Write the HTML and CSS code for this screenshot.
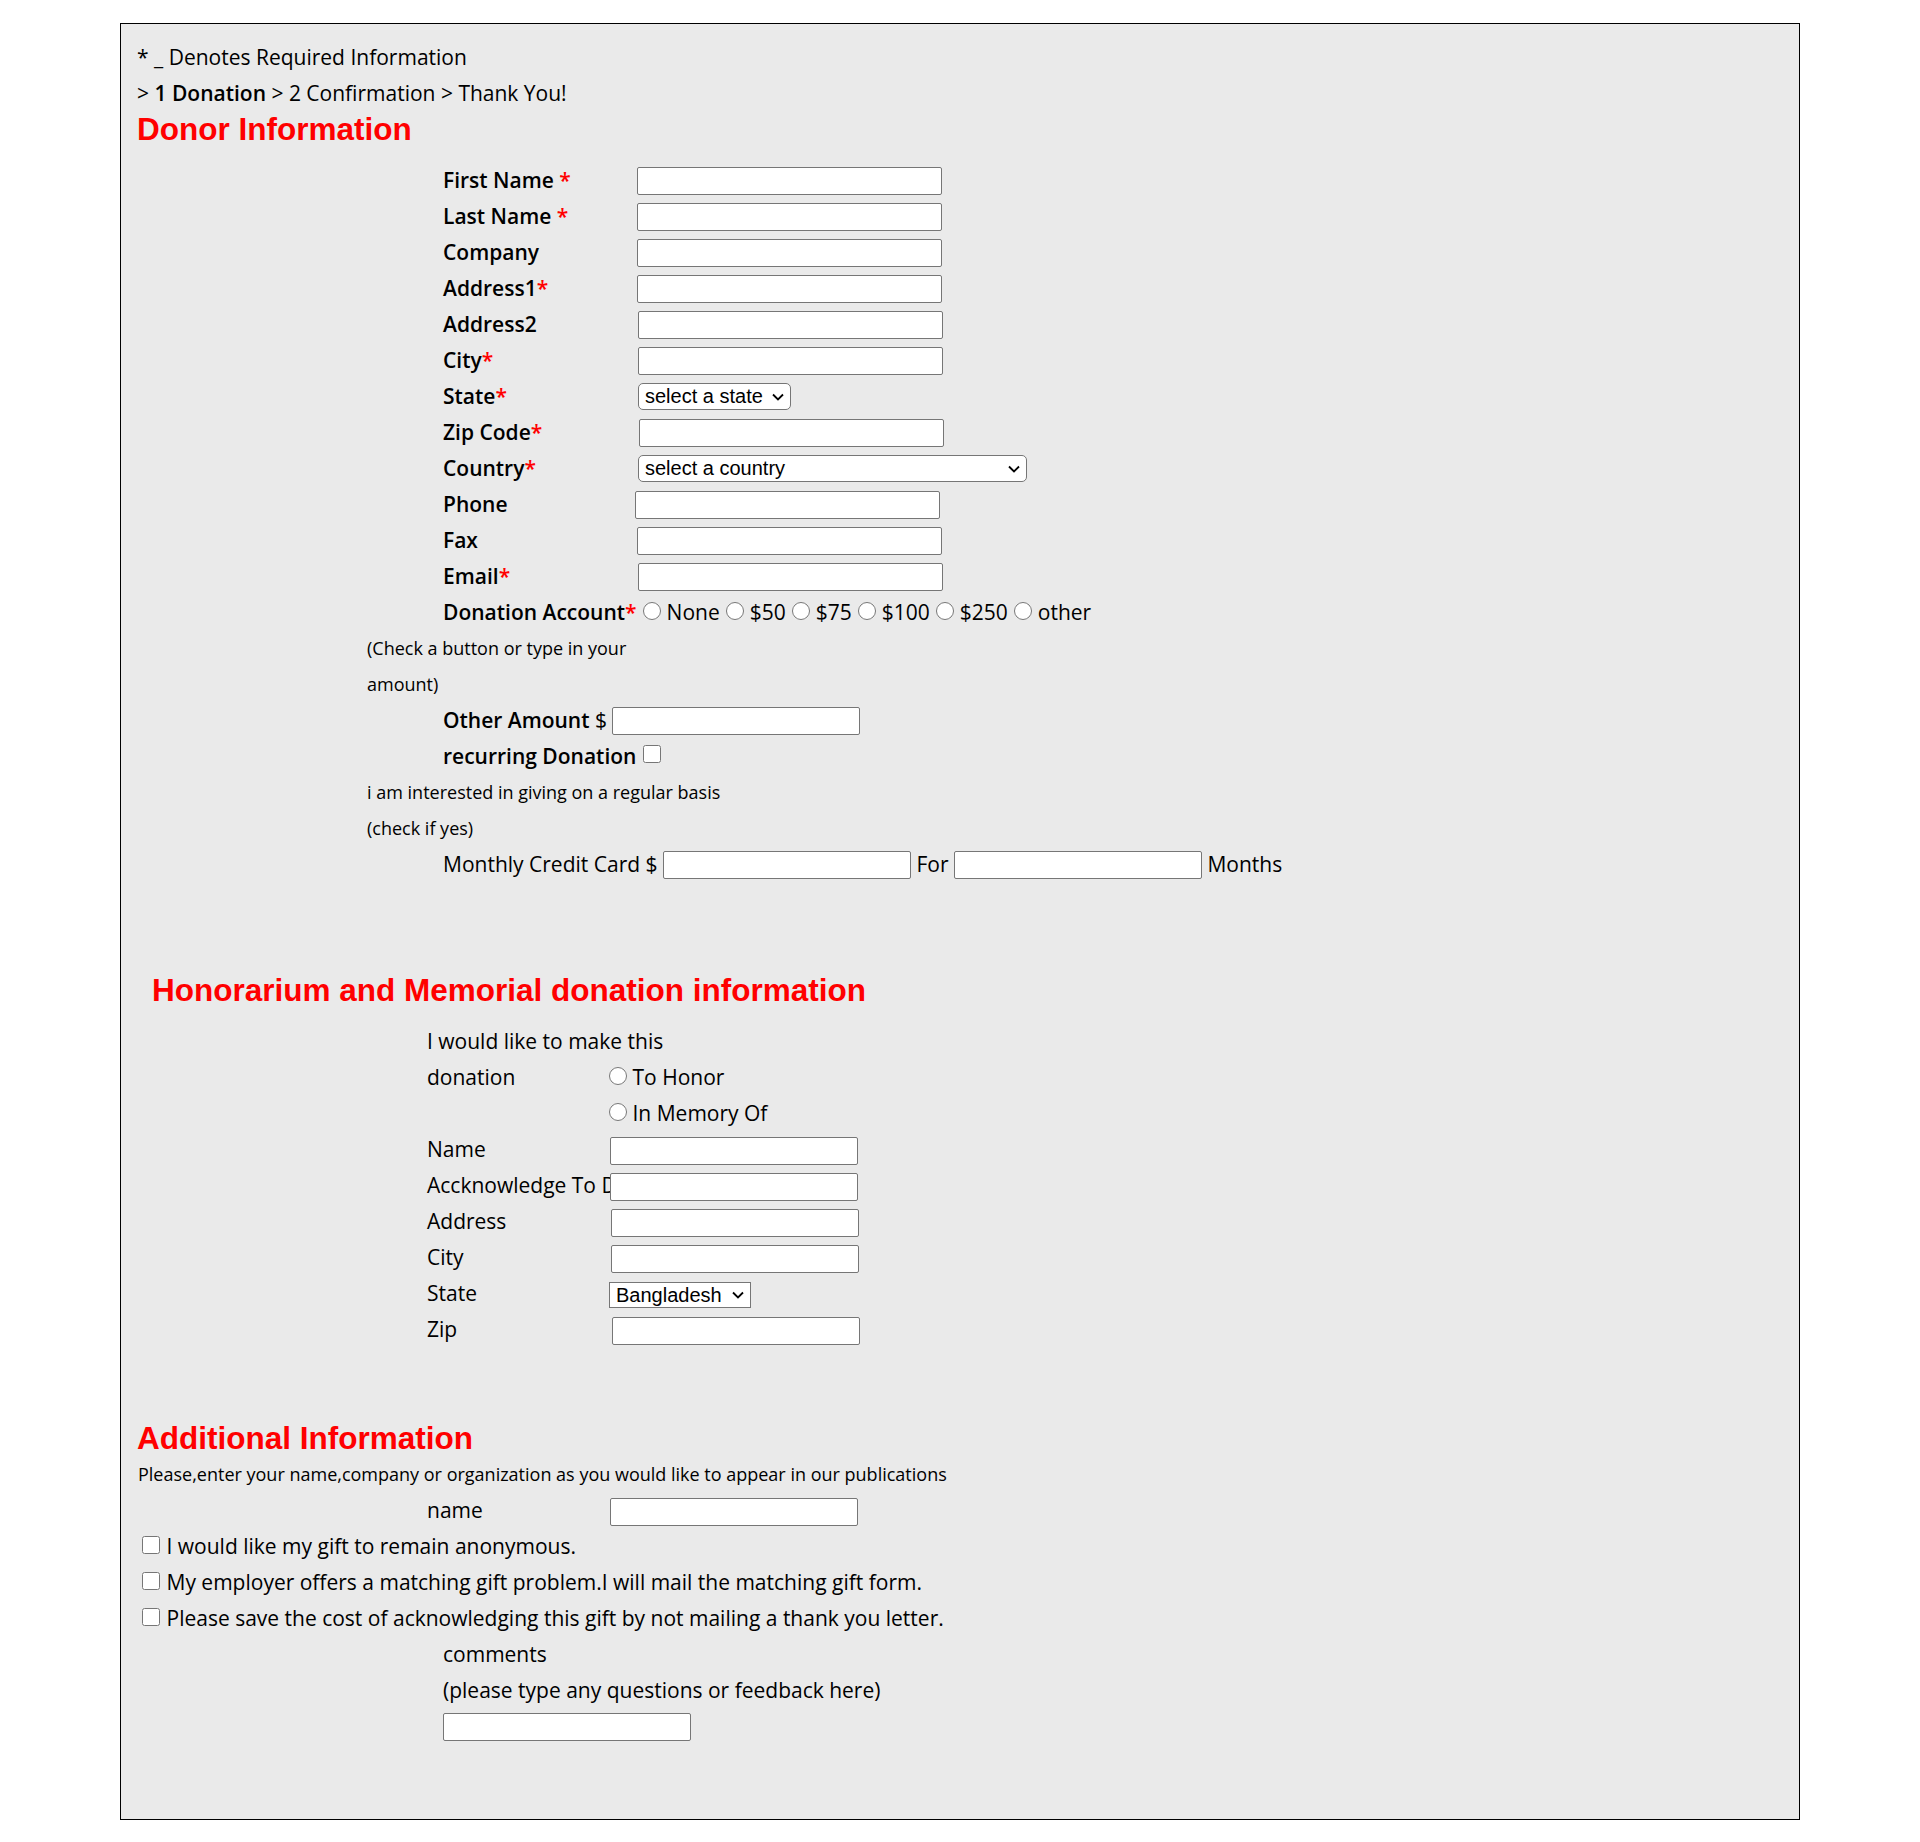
FILE: index.html
```html
<!DOCTYPE html>
<html lang="en">
<head>
<meta charset="utf-8">
<title>Donation</title>
<link rel="stylesheet" href="styles.css">
</head>
<body>
<div class="page">
  <div class="line">* _ Denotes Required Information</div>
  <div class="line">&gt; <b>1 Donation</b> &gt; 2 Confirmation &gt; Thank You!</div>
  <h2 class="head head-donor">Donor Information</h2>

  <div class="donor">
    <div class="row"><span class="lbl b">First Name <span class="req">*</span></span><input class="txt w305" type="text"></div>
    <div class="row"><span class="lbl b">Last Name <span class="req">*</span></span><input class="txt w305" type="text"></div>
    <div class="row"><span class="lbl b">Company</span><input class="txt w305" type="text"></div>
    <div class="row"><span class="lbl b">Address1<span class="req">*</span></span><input class="txt w305" type="text"></div>
    <div class="row"><span class="lbl b">Address2</span><input class="txt w305 dx1" type="text"></div>
    <div class="row"><span class="lbl b">City<span class="req">*</span></span><input class="txt w305 dx1" type="text"></div>
    <div class="row"><span class="lbl b">State<span class="req">*</span></span><span class="selwrap dx1"><select class="sel round w153"><option>select a state</option></select><svg class="chev" width="12" height="8" viewBox="0 0 12 8"><path d="M1 1.5 L6 6.5 L11 1.5" fill="none" stroke="#000" stroke-width="1.8"/></svg></span></div>
    <div class="row"><span class="lbl b">Zip Code<span class="req">*</span></span><input class="txt w305 dx2" type="text"></div>
    <div class="row"><span class="lbl b">Country<span class="req">*</span></span><span class="selwrap dx1"><select class="sel round w389"><option>select a country</option></select><svg class="chev" width="12" height="8" viewBox="0 0 12 8"><path d="M1 1.5 L6 6.5 L11 1.5" fill="none" stroke="#000" stroke-width="1.8"/></svg></span></div>
    <div class="row"><span class="lbl b">Phone</span><input class="txt w305 dxm2" type="text"></div>
    <div class="row"><span class="lbl b">Fax</span><input class="txt w305" type="text"></div>
    <div class="row"><span class="lbl b">Email<span class="req">*</span></span><input class="txt w305 dx1" type="text"></div>
    <div class="row"><span class="b">Donation Account<span class="req">*</span></span><input type="radio" name="amt" class="rd">None<input type="radio" name="amt" class="rd">$50<input type="radio" name="amt" class="rd">$75<input type="radio" name="amt" class="rd">$100<input type="radio" name="amt" class="rd">$250<input type="radio" name="amt" class="rd">other</div>
    <div class="note">(Check a button or type in your</div>
    <div class="note">amount)</div>
    <div class="row"><span class="b">Other Amount</span> $ <input class="txt w248" type="text"></div>
    <div class="row"><span class="b">recurring Donation</span><input type="checkbox" class="cb cb-rec"></div>
    <div class="note">i am interested in giving on a regular basis</div>
    <div class="note">(check if yes)</div>
    <div class="row">Monthly Credit Card $ <input class="txt w248" type="text"> For <input class="txt w248" type="text"> Months</div>
  </div>

  <h2 class="head head-hon">Honorarium and Memorial donation information</h2>

  <div class="hon">
    <div class="row">I would like to make this</div>
    <div class="row"><span class="lbl">donation</span><input type="radio" name="hon" class="rd rd-hon">To Honor</div>
    <div class="row"><span class="lbl"></span><input type="radio" name="hon" class="rd rd-hon">In Memory Of</div>
    <div class="row"><span class="lbl">Name</span><input class="txt w248" type="text"></div>
    <div class="row"><span class="lbl">Accknowledge To Donor</span><input class="txt w248" type="text"></div>
    <div class="row"><span class="lbl">Address</span><input class="txt w248 dx1" type="text"></div>
    <div class="row"><span class="lbl">City</span><input class="txt w248 dx1" type="text"></div>
    <div class="row"><span class="lbl">State</span><span class="selwrap dxm1"><select class="sel square w142"><option>Bangladesh</option></select><svg class="chev" width="12" height="8" viewBox="0 0 12 8"><path d="M1 1.5 L6 6.5 L11 1.5" fill="none" stroke="#000" stroke-width="1.8"/></svg></span></div>
    <div class="row"><span class="lbl">Zip</span><input class="txt w248 dx2" type="text"></div>
  </div>

  <h2 class="head head-add">Additional Information</h2>
  <div class="note note-add">Please,enter your name,company or organization as you would like to appear in our publications</div>
  <div class="hon">
    <div class="row"><span class="lbl">name</span><input class="txt w248" type="text"></div>
  </div>
  <div class="row"><input type="checkbox" class="cb">I would like my gift to remain anonymous.</div>
  <div class="row"><input type="checkbox" class="cb">My employer offers a matching gift problem.I will mail the matching gift form.</div>
  <div class="row"><input type="checkbox" class="cb">Please save the cost of acknowledging this gift by not mailing a thank you letter.</div>
  <div class="donor">
    <div class="row">comments</div>
    <div class="row">(please type any questions or feedback here)</div>
    <div class="row"><input class="txt w248" type="text"></div>
  </div>
</div>
</body>
</html>
```

FILE: styles.css
```css
html, body {
  margin: 0;
  padding: 0;
  background: #ffffff;
}

body {
  font-family: "Open Sans", "Liberation Sans", sans-serif;
  font-size: 21px;
  color: #000000;
  padding-top: 23px;
  padding-bottom: 22px;
}

.page {
  box-sizing: border-box;
  width: 1680px;
  margin: 0 auto;
  border: 1px solid #000000;
  background: #eaeaea;
  padding: 15px 16px 75px 16px;
}

.line {
  height: 36px;
  line-height: 36px;
  white-space: nowrap;
}

.line b,
.b {
  font-weight: 600;
}

.req {
  color: #ff0000;
}

.head {
  margin: 0;
  font-family: "Liberation Sans", Arial, sans-serif;
  font-weight: bold;
  font-size: 31.5px;
  line-height: 36px;
  color: #ff0000;
  white-space: nowrap;
}

.head-donor {
  margin-bottom: 15px;
}

.head-hon {
  margin-top: 90px;
  margin-bottom: 15px;
  padding-left: 15px;
}

.head-add {
  margin-top: 74px;
  line-height: 35px;
}

.donor {
  padding-left: 306px;
}

.hon {
  padding-left: 290px;
}

.row {
  height: 36px;
  line-height: 36px;
  white-space: nowrap;
}

.lbl {
  display: inline-block;
  width: 194px;
  height: 36px;
  vertical-align: top;
  white-space: nowrap;
}

.hon .lbl {
  width: 183px;
}

.note {
  height: 36px;
  line-height: 36px;
  font-size: 18px;
  white-space: nowrap;
  margin-left: -76px;
}

.note-add {
  margin-left: 1px;
}

.txt {
  box-sizing: border-box;
  height: 28px;
  margin: 5px 0 0 0;
  padding: 0 4px;
  border: 1px solid #767676;
  border-radius: 2px;
  background: #ffffff;
  vertical-align: top;
  font-family: "Liberation Sans", Arial, sans-serif;
  font-size: 17px;
}

.hon .txt {
  margin-top: 6px;
}

.w305 { width: 305px; }
.w248 { width: 248px; }
.w153 { width: 153px; }
.w389 { width: 389px; }
.w142 { width: 142px; }

.dx1 { margin-left: 1px; }
.dx2 { margin-left: 2px; }
.dxm1 { margin-left: -1px; }
.dxm2 { margin-left: -2px; }

.selwrap {
  position: relative;
  display: inline-block;
  vertical-align: top;
  height: 36px;
}

.sel {
  -webkit-appearance: none;
  appearance: none;
  box-sizing: border-box;
  display: block;
  height: 27px;
  margin: 5px 0 0 0;
  padding: 0 22px 0 6px;
  border: 1px solid #767676;
  background-color: #ffffff;
  color: #000000;
  font-family: "Liberation Sans", Arial, sans-serif;
  font-size: 20px;
  line-height: 25px;
}

.round {
  border-radius: 5px;
}

.square {
  border-radius: 0;
  height: 26px;
  margin-top: 7px;
}

.chev {
  position: absolute;
  right: 7px;
  top: 15px;
  pointer-events: none;
}

.square + .chev {
  top: 16px;
}

.rd {
  width: 18px;
  height: 18px;
  margin: 8px 5.5px 0 6.5px;
  vertical-align: top;
}

.rd-hon {
  margin-left: -1px;
  margin-right: 5.5px;
}

.cb {
  width: 18px;
  height: 18px;
  margin: 8px 6.5px 0 5px;
  vertical-align: top;
}

.cb-rec {
  margin-left: 6.5px;
  margin-top: 7px;
}
```
